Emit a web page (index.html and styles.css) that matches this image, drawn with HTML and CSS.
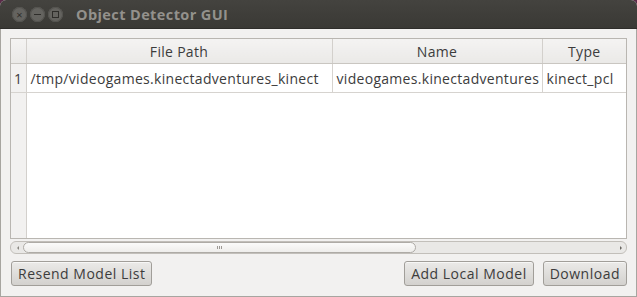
FILE: index.html
```html
<!DOCTYPE html>
<html lang="en">
<head>
  <meta charset="UTF-8">
  <title>Object Detector GUI</title>
  <link rel="stylesheet" href="styles.css">
</head>
<body>
  <div class="window">
    <div class="titlebar">
      <div class="controls">
        <span class="ctl close">&#215;</span>
        <span class="ctl min"></span>
        <span class="ctl max"></span>
      </div>
      <span class="title">Object Detector GUI</span>
    </div>
    <div class="content">
      <div class="table-frame">
        <table class="models">
          <colgroup>
            <col class="c-num">
            <col class="c-path">
            <col class="c-name">
            <col class="c-type">
          </colgroup>
          <thead>
            <tr>
              <th class="corner"></th>
              <th>File Path</th>
              <th>Name</th>
              <th>Type</th>
            </tr>
          </thead>
          <tbody>
            <tr>
              <td class="num">1</td>
              <td>/tmp/videogames.kinectadventures_kinect</td>
              <td>videogames.kinectadventures</td>
              <td>kinect_pcl</td>
            </tr>
            <tr class="filler">
              <td class="num"></td>
              <td></td>
              <td></td>
              <td></td>
            </tr>
          </tbody>
        </table>
      </div>
      <div class="hscroll">
        <span class="arrow left"></span>
        <div class="track">
          <div class="thumb"><span class="grip"></span></div>
        </div>
        <span class="arrow right"></span>
      </div>
      <div class="actions">
        <button class="btn">Resend Model List</button>
        <div class="spacer"></div>
        <button class="btn">Add Local Model</button>
        <button class="btn">Download</button>
      </div>
    </div>
  </div>
</body>
</html>
```

FILE: styles.css
```css
body {
  margin: 0;
  background: #5a2a48;
  font-family: "Open Sans", "DejaVu Sans", sans-serif;
  font-size: 14px;
  letter-spacing: 0.3px;
  color: #3c3c3c;
}
.window {
  width: 637px;
  height: 297px;
  display: flex;
  flex-direction: column;
  border-radius: 6px 6px 0 0;
  overflow: hidden;
  background: #f2f1f0;
}
.titlebar {
  height: 28px;
  flex: none;
  display: flex;
  align-items: center;
  background: linear-gradient(#44433f, #3a3935);
  border-bottom: 1px solid #2e2d2a;
}
.controls {
  display: flex;
  gap: 3px;
  margin-left: 12px;
  margin-top: 1px;
}
.ctl {
  width: 15px;
  height: 15px;
  border-radius: 50%;
  background: #64635f;
  box-shadow: inset 0 0 0 1px #54534f;
  display: flex;
  align-items: center;
  justify-content: center;
  color: #2e2d2a;
  font-size: 11px;
  letter-spacing: 0;
  line-height: 1;
}
.ctl.min::after {
  content: "";
  width: 7px;
  height: 1px;
  background: #2e2d2a;
}
.ctl.max::after {
  content: "";
  width: 5px;
  height: 5px;
  border: 1px solid #2e2d2a;
}
.title {
  margin-left: 13px;
  font-weight: bold;
  font-size: 14.5px;
  color: #93918c;
  letter-spacing: 0.4px;
}
.content {
  flex: 1;
  display: flex;
  flex-direction: column;
  padding: 9px 9px 10px 9px;
  border: 1px solid #a7a5a0;
  border-top: none;
}
.table-frame {
  height: 199px;
  border: 1px solid #b9b6b1;
  background: #fff;
  overflow: hidden;
}
.models {
  width: 100%;
  height: 100%;
  border-collapse: collapse;
  table-layout: fixed;
}
.c-num { width: 15px; }
.c-path { width: 306px; }
.c-name { width: 210px; }
.models th {
  height: 24px;
  padding: 0;
  font-weight: normal;
  background: linear-gradient(#f4f3f2, #eae9e7);
  border-right: 1px solid #d3d0cc;
  border-bottom: 1px solid #c9c6c1;
  text-align: center;
  white-space: nowrap;
}
.models th:last-child { border-right: none; }
.models td {
  height: 28px;
  padding: 0 0 0 4px;
  border-right: 1px solid #d6d3cf;
  border-bottom: 1px solid #d6d3cf;
  white-space: nowrap;
  overflow: hidden;
}
.models td:last-child { border-right: none; }
.models td.num {
  padding: 0;
  text-align: center;
  background: #f2f1f0;
  border-right: 1px solid #d3d0cc;
}
.models tr.filler td {
  height: auto;
  border-bottom: none;
  border-right-color: transparent;
}
.models tr.filler td.num { border-right: 1px solid #d3d0cc; }
.hscroll {
  margin-top: 2px;
  height: 11px;
  display: flex;
  align-items: center;
  border: 1px solid #c2bfba;
  border-radius: 6px;
  background: #e9e8e6;
}
.arrow {
  width: 12px;
  display: flex;
  justify-content: center;
}
.arrow.left::after {
  content: "";
  border: 2px solid transparent;
  border-right: 2px solid #8a8782;
}
.arrow.right::after {
  content: "";
  border: 2px solid transparent;
  border-left: 2px solid #6a6762;
  margin-left: 3px;
}
.track {
  flex: 1;
  height: 11px;
}
.thumb {
  width: 393px;
  height: 11px;
  box-sizing: border-box;
  border: 1px solid #aeaba6;
  border-radius: 6px;
  background: linear-gradient(#fbfbfa, #eeedeb);
  display: flex;
  justify-content: center;
  align-items: center;
}
.grip {
  width: 3px;
  height: 3px;
  border-left: 1px solid #9c9994;
  border-right: 1px solid #9c9994;
  position: relative;
}
.grip::after {
  content: "";
  display: block;
  width: 1px;
  height: 3px;
  margin-left: 1px;
  background: #9c9994;
}
.actions {
  margin-top: 7px;
  display: flex;
  gap: 9px;
}
.spacer { flex: 1; }
.btn {
  height: 25px;
  padding: 0 6px;
  font-family: inherit;
  font-size: 14px;
  letter-spacing: 0.5px;
  color: #3c3c3c;
  border: 1px solid #a19e99;
  border-radius: 3px;
  background: linear-gradient(#ebeae8, #d3d1ce);
  box-shadow: inset 0 1px 0 #f7f7f6;
}
.btn:first-child { margin-left: 1px; }
```
